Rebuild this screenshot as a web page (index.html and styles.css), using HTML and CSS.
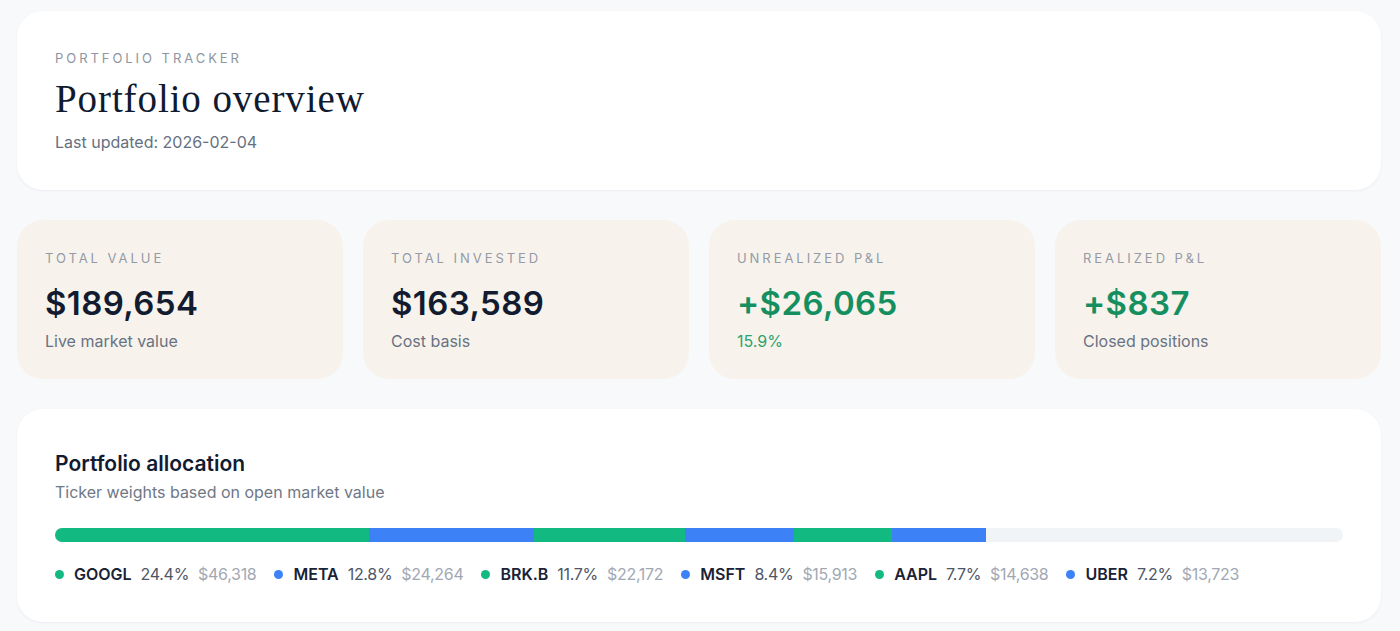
FILE: index.html
```html
<!DOCTYPE html>
<html lang="en">
<head>
<meta charset="utf-8">
<title>Portfolio overview</title>
<link rel="stylesheet" href="styles.css">
</head>
<body>
<main class="page">
  <section class="card header">
    <div class="eyebrow">PORTFOLIO TRACKER</div>
    <h1 class="title">Portfolio overview</h1>
    <div class="updated">Last updated: 2026-02-04</div>
  </section>

  <section class="stats">
    <div class="stat">
      <div class="stat-label">TOTAL VALUE</div>
      <div class="stat-value">$189,654</div>
      <div class="stat-sub">Live market value</div>
    </div>
    <div class="stat">
      <div class="stat-label">TOTAL INVESTED</div>
      <div class="stat-value">$163,589</div>
      <div class="stat-sub">Cost basis</div>
    </div>
    <div class="stat">
      <div class="stat-label">UNREALIZED P&amp;L</div>
      <div class="stat-value pos">+$26,065</div>
      <div class="stat-sub pos-sub">15.9%</div>
    </div>
    <div class="stat">
      <div class="stat-label">REALIZED P&amp;L</div>
      <div class="stat-value pos">+$837</div>
      <div class="stat-sub">Closed positions</div>
    </div>
  </section>

  <section class="card alloc">
    <h2 class="alloc-title">Portfolio allocation</h2>
    <div class="alloc-sub">Ticker weights based on open market value</div>
    <div class="bar">
      <div class="seg green" style="width:24.4%"></div>
      <div class="seg blue" style="width:12.8%"></div>
      <div class="seg green" style="width:11.75%"></div>
      <div class="seg blue" style="width:8.4%"></div>
      <div class="seg green" style="width:7.65%"></div>
      <div class="seg blue" style="width:7.3%"></div>
    </div>
    <ul class="legend">
      <li class="item"><span class="dot green"></span><span class="tick">GOOGL</span><span class="pct">24.4%</span><span class="amt">$46,318</span></li>
      <li class="item"><span class="dot blue"></span><span class="tick">META</span><span class="pct">12.8%</span><span class="amt">$24,264</span></li>
      <li class="item"><span class="dot green"></span><span class="tick">BRK.B</span><span class="pct">11.7%</span><span class="amt">$22,172</span></li>
      <li class="item"><span class="dot blue"></span><span class="tick">MSFT</span><span class="pct">8.4%</span><span class="amt">$15,913</span></li>
      <li class="item"><span class="dot green"></span><span class="tick">AAPL</span><span class="pct">7.7%</span><span class="amt">$14,638</span></li>
      <li class="item"><span class="dot blue"></span><span class="tick">UBER</span><span class="pct">7.2%</span><span class="amt">$13,723</span></li>
    </ul>
  </section>
</main>
</body>
</html>
```

FILE: styles.css
```css
* { box-sizing: border-box; }

html, body {
  margin: 0;
  padding: 0;
  background: #f8f9fb;
  font-family: "Inter", "Noto Sans", "Liberation Sans", sans-serif;
  color: #111a2e;
}

.page {
  padding: 11px 19px 10px 17px;
  display: flex;
  flex-direction: column;
  gap: 30px;
}

.card {
  background: #ffffff;
  border-radius: 26px;
  box-shadow: 0 1px 3px rgba(15, 23, 42, 0.05);
}

.header {
  height: 179px;
  padding: 38px 38px 0 38px;
}

.eyebrow {
  font-size: 13px;
  letter-spacing: 2.95px;
  color: #8e95a2;
  line-height: 18px;
  font-weight: 400;
}

.title {
  margin: 10px 0 0 0;
  font-family: "Liberation Serif", "DejaVu Serif", serif;
  font-weight: 400;
  font-size: 39px;
  line-height: 44px;
  color: #101a30;
  letter-spacing: 0.9px;
}

.updated {
  margin-top: 10px;
  font-size: 16px;
  line-height: 22px;
  color: #667080;
}

.stats {
  display: grid;
  grid-template-columns: repeat(4, 1fr);
  gap: 20px;
}

.stat {
  background: #f7f3ec;
  border-radius: 26px;
  height: 159px;
  padding: 29px 28px 0 28px;
}

.stat-label {
  font-size: 13px;
  letter-spacing: 2.95px;
  color: #949aa6;
  line-height: 18px;
}

.stat-value {
  margin-top: 13px;
  font-size: 33px;
  font-weight: 600;
  line-height: 46px;
  color: #121b30;
  letter-spacing: 0.4px;
}

.stat-value.pos { color: #158f60; }

.stat-sub {
  margin-top: 4px;
  font-size: 16px;
  line-height: 22px;
  color: #697282;
}

.stat-sub.pos-sub { color: #2aa36e; }

.alloc {
  height: 213px;
  padding: 41px 38px 0 38px;
}

.alloc-title {
  margin: 0;
  font-size: 21px;
  font-weight: 600;
  line-height: 28px;
  color: #121b30;
}

.alloc-sub {
  margin-top: 3px;
  font-size: 16px;
  line-height: 22px;
  color: #6f7886;
}

.bar {
  margin-top: 25px;
  height: 14px;
  border-radius: 7px;
  background: #f1f4f7;
  display: flex;
  overflow: hidden;
}

.seg { height: 100%; }
.seg.green, .dot.green { background: #12b981; }
.seg.blue, .dot.blue { background: #3c82f6; }

.legend {
  list-style: none;
  margin: 21px 0 0 0;
  padding: 0;
  display: flex;
  gap: 18px;
  font-size: 16px;
  line-height: 22px;
}

.item {
  display: flex;
  align-items: center;
}

.dot {
  width: 9px;
  height: 9px;
  border-radius: 50%;
  margin-right: 10px;
}

.tick {
  font-weight: 600;
  color: #1a2236;
  margin-right: 9px;
}

.pct {
  color: #4e5666;
  margin-right: 9px;
  letter-spacing: -0.3px;
}

.amt {
  color: #a2a8b3;
  letter-spacing: -0.3px;
}
```
